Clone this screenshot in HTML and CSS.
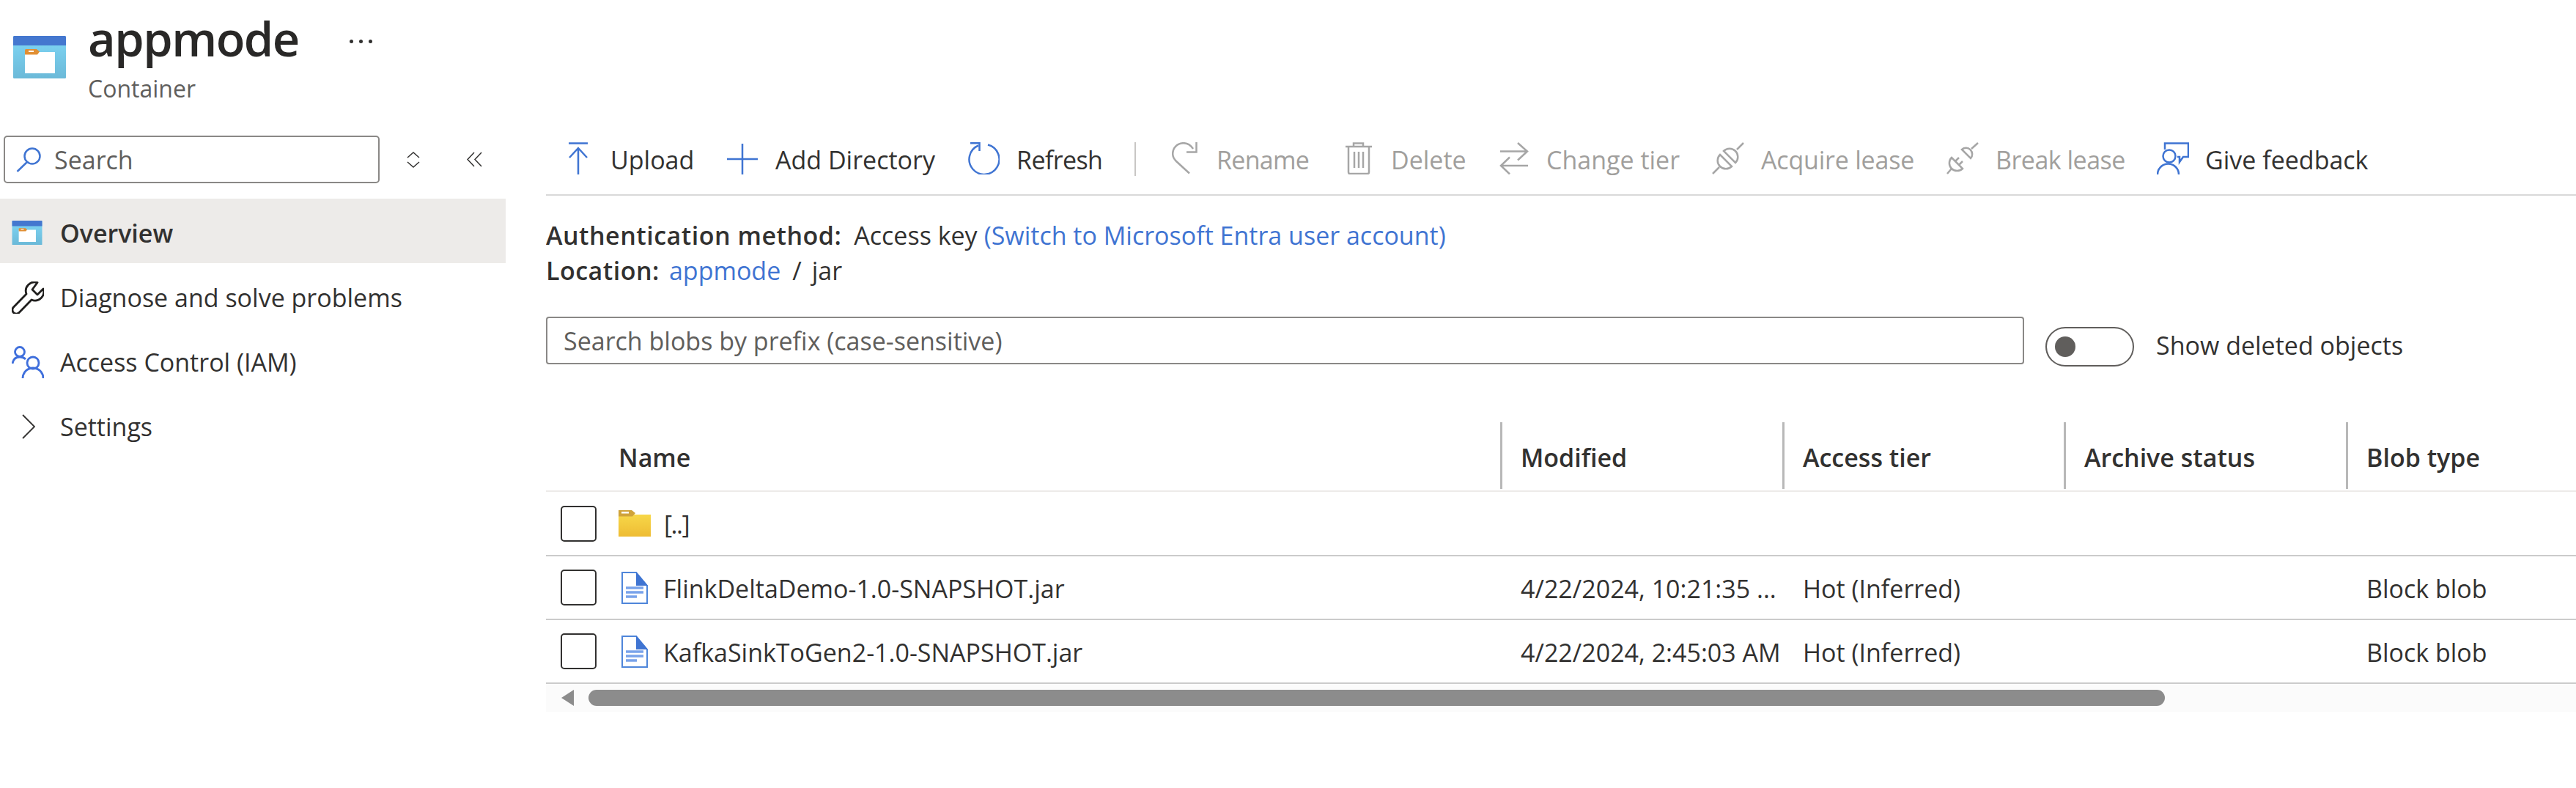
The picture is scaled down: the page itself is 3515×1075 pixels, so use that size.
FILE: index.html
```html
<!DOCTYPE html>
<html lang="en">
<head>
<meta charset="utf-8">
<title>appmode - Container</title>
<link rel="stylesheet" href="styles.css">
</head>
<body>
<svg width="0" height="0" class="defs">
  <defs>
    <linearGradient id="cbody" x1="0" y1="0" x2="0" y2="1"><stop offset="0" stop-color="#7fd6f5"/><stop offset="1" stop-color="#6bb9d8"/></linearGradient>
    <linearGradient id="fold" x1="0" y1="0" x2="0" y2="1"><stop offset="0" stop-color="#f7d748"/><stop offset="1" stop-color="#eebc34"/></linearGradient>
    <symbol id="container" viewBox="0 0 72 58">
      <rect y="0" width="72" height="58" rx="1.5" fill="url(#cbody)"/>
      <path d="M0 13V1.500A1.500 1.500 0 0 1 1.500 0H70.500A1.500 1.500 0 0 1 72 1.500V13Z" fill="#4477cf"/>
      <rect x="16" y="22" width="41" height="29" fill="#fff"/>
      <path d="M16 19.500Q16 18 17.500 18H32L36 21.500L33 25.500H16Z" fill="#e18f34"/>
      <rect x="21" y="20" width="7" height="2" fill="#fff"/>
    </symbol>
    <symbol id="file" viewBox="0 0 36 44">
      <path d="M1 1H20L35 19V43H1Z" fill="#fff" stroke="#4f86da" stroke-width="2"/>
      <path d="M20 0L36 19H20Z" fill="#3f74d2"/>
      <path d="M6 22H30M6 28H30M6 34H21" stroke="#79a3ea" stroke-width="3.500" fill="none"/>
    </symbol>
  </defs>
</svg>
<header class="page-head">
  <svg class="head-icon" width="72" height="58"><use href="#container"/></svg>
  <div class="head-text">
    <div class="title-row">
      <h1 class="title">appmode</h1>
      <span class="more"><i></i><i></i><i></i></span>
    </div>
    <div class="subtitle">Container</div>
  </div>
</header>
<div class="layout">
  <nav class="side">
    <div class="side-search">
      <div class="search-box">
        <svg class="search-ico" width="34" height="34" viewBox="0 0 34 34" fill="none" stroke="#3f74d2" stroke-width="2.500"><circle cx="22" cy="12" r="10.500"/><path d="M15 20L1.500 33"/></svg>
        <span>Search</span>
      </div>
      <svg class="updown" width="18" height="22" viewBox="0 0 18 22" fill="none" stroke="#323130" stroke-width="1.500"><path d="M1 8L9 1L17 8M1 14L9 21L17 14"/></svg>
      <svg class="collapse" width="21" height="21" viewBox="0 0 21 21" fill="none" stroke="#323130" stroke-width="1.500"><path d="M10 1L1 10.500L10 20M20 1L11 10.500L20 20"/></svg>
    </div>
    <ul class="menu">
      <li class="menu-item active">
        <span class="menu-ico"><svg width="42" height="33"><use href="#container"/></svg></span>
        <span>Overview</span>
      </li>
      <li class="menu-item">
        <span class="menu-ico"><svg width="44" height="44" viewBox="0 0 44 44" fill="none" stroke="#201f1e" stroke-width="2.800" stroke-linejoin="round"><path d="M35 1.500A12 12 0 0 0 20 17L2.500 35A5.300 5.300 0 0 0 10 42.500L27 25A12 12 0 0 0 43 10L35 18L28 11Z"/></svg></span>
        <span>Diagnose and solve problems</span>
      </li>
      <li class="menu-item">
        <span class="menu-ico"><svg width="44" height="44" viewBox="0 0 44 44" fill="none" stroke="#3f6fdc" stroke-width="2.800"><circle cx="11" cy="8" r="6.500"/><path d="M1 24C2 18 6 15 11 15C14 15 17 16 19 18"/><circle cx="29" cy="23" r="8"/><path d="M15 44A14 14 0 0 1 43 44"/></svg></span>
        <span>Access Control (IAM)</span>
      </li>
      <li class="menu-item">
        <span class="menu-ico"><svg class="chev" width="18" height="34" viewBox="0 0 18 34" fill="none" stroke="#323130" stroke-width="1.800"><path d="M1 1L17 17L1 33"/></svg></span>
        <span>Settings</span>
      </li>
    </ul>
  </nav>
  <main class="main">
    <div class="toolbar">
      <button class="tool t-upload"><svg width="26" height="44" viewBox="0 0 26 44" fill="none" stroke="#3f74d2" stroke-width="2.500"><path d="M0 1.500H26M13 44V8M1 21L13 8L25 21"/></svg><span>Upload</span></button>
      <button class="tool t-add"><svg width="42" height="42" viewBox="0 0 42 42" fill="none" stroke="#3f74d2" stroke-width="2.500"><path d="M21 0V42M0 21H42"/></svg><span>Add Directory</span></button>
      <button class="tool t-refresh"><svg width="44" height="44" viewBox="0 0 44 44" fill="none" stroke="#3f74d2" stroke-width="2.500"><path d="M15 4.500A20.500 20.500 0 1 0 28 3.500"/><path d="M4 1.200H16.500V12"/></svg><span>Refresh</span></button>
      <span class="tool-sep"></span>
      <button class="tool off t-rename"><svg width="35" height="44" viewBox="0 0 35 44" fill="none" stroke="#a6a6a6" stroke-width="2.500"><path d="M29 9C25 3 20 1.200 16 1.200C7 1.200 1.200 8 1.200 16C1.200 20 3 23 6 26L24 42.500"/><path d="M33.500 0V13.500H20"/></svg><span>Rename</span></button>
      <button class="tool off t-delete"><svg width="36" height="44" viewBox="0 0 36 44" fill="none" stroke="#a6a6a6" stroke-width="2.500"><path d="M0 6H36M11 6V1.500H24V6M4 6V41A2 2 0 0 0 6 43H30A2 2 0 0 0 32 41V6M12 13V35M18 13V35M24 13V35"/></svg><span>Delete</span></button>
      <button class="tool off t-tier"><svg width="40" height="44" viewBox="0 0 40 44" fill="none" stroke="#a6a6a6" stroke-width="2.500"><path d="M1 12.500H38M25 1L38 12.500L25 24.500M39 32H2M14 20.500L2 32L14 43.500"/></svg><span>Change tier</span></button>
      <button class="tool off t-acquire"><svg width="44" height="44" viewBox="0 0 44 44" fill="none" stroke="#a6a6a6" stroke-width="2.500"><path d="M1 43L10 34M34 10L43 1"/><path d="M11 17L27 33A11.300 11.300 0 0 1 11 17Z"/><path d="M16 12A11.300 11.300 0 0 1 32 28Z"/></svg><span>Acquire lease</span></button>
      <button class="tool off t-break"><svg width="44" height="44" viewBox="0 0 44 44" fill="none" stroke="#a6a6a6" stroke-width="2.500"><path d="M1 43L7 36M34 9L43 1"/><path d="M7 21L22 36A10.600 10.600 0 0 1 7 21Z"/><path d="M12 26L17 21M17 31L22 26"/><path d="M21 10A8.500 8.500 0 0 1 33 22Z"/></svg><span>Break lease</span></button>
      <button class="tool t-feedback"><svg width="44" height="44" viewBox="0 0 44 44" fill="none" stroke="#3f74d2" stroke-width="2.500"><path d="M11 10V1.500H43V20H36L31 27V20H28"/><circle cx="17" cy="19" r="8.500"/><path d="M1 44A14.500 14.500 0 0 1 30 44"/></svg><span>Give feedback</span></button>
    </div>
    <section class="info">
      <p class="info-line"><b>Authentication method:</b><span class="info-val">Access key</span><a class="link">(Switch to Microsoft Entra user account)</a></p>
      <p class="info-line"><b>Location:</b><a class="link loc">appmode</a><span class="slash">/</span><span>jar</span></p>
    </section>
    <div class="filter">
      <div class="blob-search">Search blobs by prefix (case-sensitive)</div>
      <span class="toggle"><i></i></span>
      <span class="toggle-label">Show deleted objects</span>
    </div>
    <div class="grid">
      <div class="row head">
        <div></div>
        <div class="cell cell-name">Name</div>
        <div class="cell sep">Modified</div>
        <div class="cell sep">Access tier</div>
        <div class="cell sep">Archive status</div>
        <div class="cell sep">Blob type</div>
      </div>
      <div class="row">
        <div class="check-cell"><span class="check"></span></div>
        <div class="cell name"><svg class="folder" width="44" height="36" viewBox="0 0 44 36"><path d="M0 6H44V36H0Z" fill="url(#fold)"/><path d="M0 0H18L23 4L19 8.500H0Z" fill="#d0a33a"/><rect x="4" y="2" width="10" height="2.500" fill="#fff"/></svg><span class="up">[..]</span></div>
        <div class="cell"></div><div class="cell"></div><div class="cell"></div><div class="cell"></div>
      </div>
      <div class="row">
        <div class="check-cell"><span class="check"></span></div>
        <div class="cell name"><svg class="fileico" width="36" height="44"><use href="#file"/></svg><span>FlinkDeltaDemo-1.0-SNAPSHOT.jar</span></div>
        <div class="cell">4/22/2024, 10:21:35 ...</div>
        <div class="cell">Hot (Inferred)</div>
        <div class="cell"></div>
        <div class="cell">Block blob</div>
      </div>
      <div class="row">
        <div class="check-cell"><span class="check"></span></div>
        <div class="cell name"><svg class="fileico" width="36" height="44"><use href="#file"/></svg><span>KafkaSinkToGen2-1.0-SNAPSHOT.jar</span></div>
        <div class="cell">4/22/2024, 2:45:03 AM</div>
        <div class="cell">Hot (Inferred)</div>
        <div class="cell"></div>
        <div class="cell">Block blob</div>
      </div>
      <div class="scrollbar">
        <span class="sb-arrow"></span>
        <span class="sb-thumb"></span>
      </div>
    </div>
  </main>
</div>
</body>
</html>
```
FILE: styles.css
```css
* { box-sizing: border-box; }
html, body { margin: 0; padding: 0; }
body {
  width: 3515px;
  height: 1075px;
  overflow: hidden;
  background: #fff;
  color: #323130;
  font-family: "Open Sans", "Noto Sans", sans-serif;
  font-size: 34px;
}
.defs { position: absolute; }
p, ul, h1 { margin: 0; padding: 0; }
ul { list-style: none; }
button { font: inherit; color: inherit; background: none; border: 0; padding: 0; text-align: left; }

.page-head { display: flex; height: 185px; padding-left: 18px; }
.head-icon { margin-top: 49px; flex: none; }
.head-text { margin-left: 30px; }
.title-row { display: flex; align-items: flex-start; }
.title { font-size: 65px; font-weight: 600; line-height: 90px; margin-top: 7px; height: 76px; letter-spacing: -1.5px; color: #292827; }
.more { display: flex; gap: 8px; margin: 54px 0 0 69px; }
.more i { width: 5px; height: 5px; border-radius: 50%; background: #323130; }
.subtitle { font-size: 32px; line-height: 40px; margin-top: 18px; color: #605e5c; }

.layout { display: flex; }
.side { width: 690px; flex: none; }
.side-search { display: flex; align-items: center; height: 65px; padding-left: 5px; }
.search-box { width: 513px; height: 65px; border: 2px solid #8a8886; border-radius: 5px; display: flex; align-items: center; padding-left: 15px; color: #605e5c; background: #fff; }
.search-ico { margin-right: 18px; flex: none; }
.updown { margin-left: 37px; }
.collapse { margin-left: 64px; }
.menu { margin-top: 21px; }
.menu-item { height: 88px; display: flex; align-items: center; padding: 5px 0 0 16px; }
.menu-item.active { background: #edebe9; font-weight: 600; }
.menu-ico { width: 66px; flex: none; display: flex; }
.chev { margin-left: 14px; }

.main { margin-left: 55px; width: 2770px; overflow: hidden; }
.toolbar { display: flex; align-items: flex-start; height: 82px; padding-top: 9px; border-bottom: 2px solid #d9d9d9; }
.tool { display: flex; align-items: flex-start; flex: none; white-space: nowrap; height: 46px; }
.tool span { margin-top: 1px; }
.tool.off { color: #a19f9d; }
.t-upload { margin-left: 31px; width: 216px; }
.t-upload span { margin-left: 31px; }
.t-add { width: 328px; }
.t-add svg { margin-top: 2px; }
.t-add span { margin-left: 24px; }
.t-refresh { width: 228px; }
.t-refresh span { margin-left: 23px; letter-spacing: -0.6px; }
.tool-sep { width: 2px; height: 46px; background: #c8c6c4; flex: none; }
.t-rename { margin-left: 49px; width: 237px; }
.t-rename span { margin-left: 26px; letter-spacing: -0.7px; }
.t-delete { width: 210px; }
.t-delete span { margin-left: 26px; }
.t-tier { width: 290px; }
.t-tier span { margin-left: 24px; }
.t-acquire { width: 320px; }
.t-acquire span { margin-left: 23px; letter-spacing: -0.2px; }
.t-break { width: 287px; }
.t-break span { margin-left: 23px; letter-spacing: -0.5px; }
.t-feedback { width: 300px; }
.t-feedback span { margin-left: 22px; }

.info { margin-top: 30px; }
.info-line { height: 48px; line-height: 48px; display: flex; white-space: nowrap; }
.info-line b { font-weight: 600; letter-spacing: 0.5px; }
.info-val { margin-left: 17px; }
.link { color: #3f74d2; margin-left: 9px; }
.loc { margin-left: 13px; }
.slash { margin: 0 14px 0 16px; }

.filter { display: flex; align-items: flex-start; margin-top: 39px; height: 65px; }
.blob-search { width: 2017px; height: 65px; border: 2px solid #8a8886; border-radius: 4px; padding-left: 22px; display: flex; align-items: center; color: #605e5c; flex: none; }
.toggle { width: 121px; height: 54px; margin: 14px 0 0 29px; border: 2px solid #605e5c; border-radius: 27px; flex: none; display: flex; align-items: center; padding-left: 11px; }
.toggle i { width: 28px; height: 28px; border-radius: 50%; background: #605e5c; }
.toggle-label { margin: 16px 0 0 30px; white-space: nowrap; }

.grid { margin-top: 79px; width: 2770px; }
.row { display: grid; grid-template-columns: 101px 1201px 385px 384px 385px 314px; height: 87px; border-bottom: 2px solid #cbcbcb; align-items: center; }
.row.head { height: 95px; border-bottom-color: #edebe9; font-weight: 600; align-items: stretch; padding-bottom: 2px; }
.row:nth-child(2) { height: 88px; }
.cell { white-space: nowrap; padding: 2px 0 0 28px; }
.row.head .cell { padding-top: 25px; }
.row.head .cell-name { padding-left: 0; margin-left: -2px; }
.cell.sep { border-left: 3px solid #b8b8b8; padding-left: 25px; }
.cell.name { padding: 0; display: flex; align-items: center; }
.cell.name span { padding-top: 2px; }
.cell.name .up { letter-spacing: -1.5px; margin-left: -1px; }
.folder { margin: 0 19px 0 -2px; }
.fileico { margin: 0 21px 0 2px; }
.check-cell { display: flex; padding-left: 20px; }
.check { width: 49px; height: 49px; border: 2px solid #323130; border-radius: 5px; }
.scrollbar { height: 38px; background: #fbfbfb; display: flex; align-items: center; }
.sb-arrow { width: 0; height: 0; margin-left: 21px; border-top: 11px solid transparent; border-bottom: 11px solid transparent; border-right: 17px solid #8c8c8c; }
.sb-thumb { width: 2151px; height: 22px; margin-left: 20px; background: #8c8c8c; border-radius: 11px; }
```
